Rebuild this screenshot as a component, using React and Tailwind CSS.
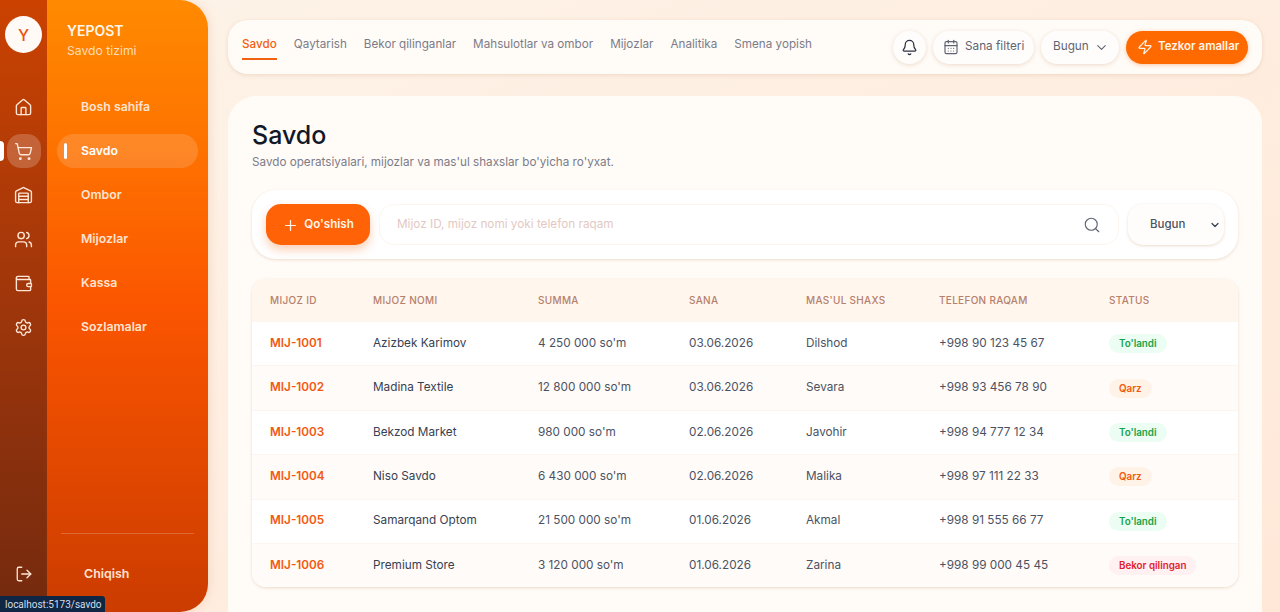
import { Bell, CalendarDays, ChevronDown, Home, LogOut, Plus, Search, Settings, ShoppingCart, Users, Wallet, Warehouse, Zap } from 'lucide-react';

const railIcons = [
  { icon: Home, label: 'Bosh sahifa' },
  { icon: ShoppingCart, label: 'Savdo', active: true },
  { icon: Warehouse, label: 'Ombor' },
  { icon: Users, label: 'Mijozlar' },
  { icon: Wallet, label: 'Kassa' },
  { icon: Settings, label: 'Sozlamalar' },
];

const tabs = ['Savdo', 'Qaytarish', 'Bekor qilinganlar', 'Mahsulotlar va ombor', 'Mijozlar', 'Analitika', 'Smena yopish'];

const headers = ['Mijoz ID', 'Mijoz nomi', 'Summa', 'Sana', "Mas'ul shaxs", 'Telefon raqam', 'Status'];

const rows = [
  ['MIJ-1001', 'Azizbek Karimov', "4 250 000 so'm", '03.06.2026', 'Dilshod', '+998 90 123 45 67', 'paid'],
  ['MIJ-1002', 'Madina Textile', "12 800 000 so'm", '03.06.2026', 'Sevara', '+998 93 456 78 90', 'debt'],
  ['MIJ-1003', 'Bekzod Market', "980 000 so'm", '02.06.2026', 'Javohir', '+998 94 777 12 34', 'paid'],
  ['MIJ-1004', 'Niso Savdo', "6 430 000 so'm", '02.06.2026', 'Malika', '+998 97 111 22 33', 'debt'],
  ['MIJ-1005', 'Samarqand Optom', "21 500 000 so'm", '01.06.2026', 'Akmal', '+998 91 555 66 77', 'paid'],
  ['MIJ-1006', 'Premium Store', "3 120 000 so'm", '01.06.2026', 'Zarina', '+998 99 000 45 45', 'cancelled'],
];

const statuses = {
  paid: { label: "To'landi", className: 'bg-[#ecfdf3] text-[#16a34a]' },
  debt: { label: 'Qarz', className: 'bg-[#fff3e8] text-[#f15a0a]' },
  cancelled: { label: 'Bekor qilingan', className: 'bg-[#fff0f1] text-[#e11d2e]' },
};

const gridCols = 'grid grid-cols-[103px_165px_151px_117px_133px_170px_1fr] items-center px-[18px]';

function Sidebar() {
  return (
    <div className="flex h-full w-[208px] shrink-0">
      <div className="flex w-[47px] shrink-0 flex-col items-center bg-gradient-to-b from-[#cb4200] to-[#742a0e] pt-4 pb-[29px]">
        <div className="flex h-[37px] w-[37px] items-center justify-center rounded-full bg-[#fffaf5] text-[16px] font-medium text-[#e9550f]">
          Y
        </div>
        <div className="mt-[37px] flex flex-col gap-[10px]">
          {railIcons.map(({ icon: Icon, label, active }) => (
            <div
              key={label}
              className={`relative flex h-[34px] w-[34px] items-center justify-center rounded-[14px] text-[#ffe6d6] ${active ? 'bg-white/20' : ''}`}
            >
              {active && <span className="absolute top-[7px] -left-[7px] h-[20px] w-[4px] rounded-r-sm bg-white" />}
              <Icon size={19} strokeWidth={1.75} />
            </div>
          ))}
        </div>
        <LogOut size={18} strokeWidth={1.75} className="mt-auto text-[#ffe6d6]" />
      </div>

      <div className="flex flex-1 flex-col rounded-r-[28px] bg-gradient-to-b from-[#ff8a00] via-[#fb5500] to-[#cb3c00] pt-[23px] pb-[28px] shadow-[2px_0_10px_rgba(200,80,0,0.12)]">
        <div className="pl-5">
          <div className="text-[14px] leading-[16px] font-semibold text-[#fff6ea]">YEPOST</div>
          <div className="mt-[4px] text-[12.2px] leading-[16px] text-[#ffdcb8]">Savdo tizimi</div>
        </div>
        <nav className="mt-[31px] flex flex-col gap-[10px] px-[10px]">
          {railIcons.map(({ label, active }) => (
            <div
              key={label}
              className={`relative flex h-[34px] items-center rounded-[17px] pl-[24px] text-[12.3px] font-semibold ${active ? 'bg-white/15 text-white' : 'text-[#ffe3d0]'}`}
            >
              {active && <span className="absolute top-[9px] left-[7px] h-[16px] w-[3px] rounded-sm bg-white" />}
              {label}
            </div>
          ))}
        </nav>
        <div className="mx-[14px] mt-auto border-t border-white/20 pt-[30px] pl-[23px] text-[12.4px] leading-[20px] font-semibold text-[#ffe3d0]">
          Chiqish
        </div>
      </div>
    </div>
  );
}

function TopBar() {
  return (
    <header className="flex h-[54px] items-center justify-between rounded-[20px] bg-[#fffbf7] px-[14px] shadow-[0_1px_4px_rgba(160,90,30,0.16)]">
      <nav className="flex gap-[17px] self-start pt-[16px] text-[11.7px] text-[#7c7c88]">
        {tabs.map((tab, i) => (
          <span
            key={tab}
            className={`h-[24px] leading-[17px] ${i === 0 ? 'border-b-2 border-[#f2610f] font-medium text-[#f2610f]' : ''}`}
          >
            {tab}
          </span>
        ))}
      </nav>
      <div className="flex items-center gap-[7px] text-[11.75px] text-[#5f6472]">
        <button className="flex h-[33px] w-[33px] items-center justify-center rounded-full bg-[#fffdfb] text-[#2b3040] shadow-[0_1px_4px_rgba(160,90,30,0.2)]">
          <Bell size={17} strokeWidth={1.75} />
        </button>
        <button className="flex h-[33px] w-[101px] items-center gap-[6px] rounded-full bg-[#fffdfb] pl-[10px] shadow-[0_1px_4px_rgba(160,90,30,0.2)]">
          <CalendarDays size={16} strokeWidth={1.75} />
          Sana filteri
        </button>
        <button className="flex h-[33px] w-[78px] items-center justify-between rounded-full bg-[#fffdfb] pr-[10px] pl-[12px] shadow-[0_1px_4px_rgba(160,90,30,0.2)]">
          Bugun
          <ChevronDown size={15} strokeWidth={1.75} />
        </button>
        <button className="flex h-[33px] w-[122px] items-center gap-[5px] rounded-full bg-[#ff6a00] pl-[11px] text-[11.5px] font-semibold text-[#fff4e8] shadow-[0_1px_4px_rgba(240,100,0,0.35)]">
          <Zap size={16} strokeWidth={1.75} />
          Tezkor amallar
        </button>
      </div>
    </header>
  );
}

function Toolbar() {
  return (
    <div className="mt-[19px] flex h-[69px] items-center gap-[9px] rounded-[24px] bg-white px-[14px] shadow-[0_1px_3px_rgba(160,90,30,0.18)]">
      <button className="flex h-[41px] w-[104px] items-center justify-center gap-[5px] rounded-[15px] bg-[#ff6207] pt-px text-[11.6px] font-semibold text-[#fff4e8] shadow-[0_5px_10px_rgba(240,100,20,0.3)]">
        <Plus size={17} strokeWidth={1.75} />
        Qo'shish
      </button>
      <div className="flex h-[41px] flex-1 items-center justify-between rounded-[15px] border border-[#fdf6ee] bg-white px-[17px] pt-px text-[11.75px] text-[#e3c9c2]">
        Mijoz ID, mijoz nomi yoki telefon raqam
        <Search size={18} strokeWidth={1.5} className="text-[#5f6472]" />
      </div>
      <div className="flex h-[41px] w-[96px] items-center justify-between rounded-[15px] bg-[#fffdfb] pt-px pr-[3px] pl-[22px] text-[11.5px] font-medium text-[#4b5263] shadow-[0_1px_3px_rgba(160,90,30,0.22)]">
        Bugun
        <ChevronDown size={12} strokeWidth={2.5} className="text-[#374151]" />
      </div>
    </div>
  );
}

function SalesTable() {
  return (
    <div className="mt-[20px] overflow-hidden rounded-[14px] bg-white shadow-[0_1px_3px_rgba(160,90,30,0.2)]">
      <div className={`${gridCols} h-[42px] bg-[#fff6ee] text-[10px] font-medium tracking-[0.3px] text-[#b5806c] uppercase`}>
        {headers.map((h) => (
          <div key={h}>{h}</div>
        ))}
      </div>
      {rows.map(([id, name, sum, date, person, phone, status], i) => (
        <div
          key={id}
          className={`${gridCols} h-[44.4px] border-t border-[#fdf6f0] text-[11.75px] text-[#4b5263] ${i % 2 === 1 ? 'bg-[#fffbf8]' : 'bg-white'}`}
        >
          <div className="font-semibold text-[#f2590f]">{id}</div>
          <div className="text-[#374151]">{name}</div>
          <div>{sum}</div>
          <div>{date}</div>
          <div>{person}</div>
          <div>{phone}</div>
          <div>
            <span className={`inline-block rounded-full px-[10px] py-[2px] text-[9.8px] leading-[15px] font-semibold ${statuses[status].className}`}>
              {statuses[status].label}
            </span>
          </div>
        </div>
      ))}
    </div>
  );
}

export default function App() {
  return (
    <div className="relative flex h-screen overflow-hidden bg-gradient-to-br from-[#fdf3e8] to-[#ffe8d8] font-['Inter',sans-serif]">
      <Sidebar />
      <main className="flex min-w-0 flex-1 flex-col pt-5 pr-[18px] pl-5">
        <TopBar />
        <section className="mt-[22px] flex-1 rounded-t-[28px] bg-[#fffbf7] px-[24px] pt-[23px]">
          <h1 className="text-[25px] leading-[32px] font-medium text-[#111827]">Savdo</h1>
          <p className="mt-[2px] text-[11.7px] leading-[18px] text-[#7c7c88]">
            Savdo operatsiyalari, mijozlar va mas'ul shaxslar bo'yicha ro'yxat.
          </p>
          <Toolbar />
          <SalesTable />
        </section>
      </main>
      <div className="absolute bottom-0 left-0 h-[16px] w-[105px] rounded-tr-[3px] bg-[#0f2744] pl-[5px] font-['Roboto',sans-serif] text-[10px] leading-[17px] text-[#d5dde6]">
        localhost:5173/savdo
      </div>
    </div>
  );
}
